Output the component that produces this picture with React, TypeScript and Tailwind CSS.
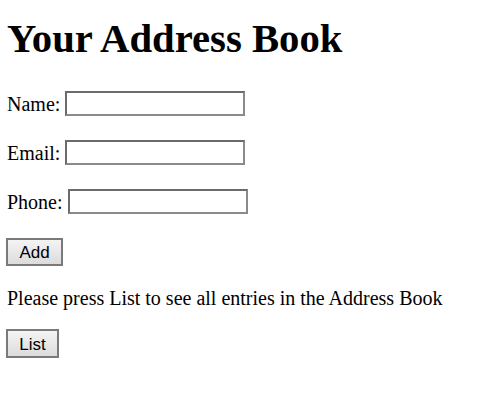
export default function App() {
  const fields = ["Name:", "Email:", "Phone:"];

  return (
    <div className="min-h-screen bg-white px-[7px] pt-[17px] font-['Liberation_Serif',serif] text-[20px] text-black">
      <h1 className="m-0 text-[40.7px] font-bold leading-[44px]">
        Your Address Book
      </h1>

      <div className="mt-[30px] flex flex-col gap-[24px]">
        {fields.map((label) => (
          <div key={label} className="flex h-[25px] items-center">
            <span className="leading-[22px]">{label}</span>
            <input
              type="text"
              className="ml-[5px] h-[25px] w-[180px] border-2 border-t-[#6b6b6b] border-l-[#6b6b6b] border-r-[#8a8a8a] border-b-[#8a8a8a] bg-white px-1 outline-none"
            />
          </div>
        ))}
        <div className="flex h-[28px] items-center">
          <button className="-ml-px h-[28px] w-[57px] border-2 border-[#7a7a7a] bg-gradient-to-b from-[#f4f4f4] to-[#dcdcdc] pt-[2px] font-['Liberation_Sans',sans-serif] text-[17px] leading-[20px] text-black">
            Add
          </button>
        </div>
      </div>

      <p className="mt-[21px] leading-[22px]">
        Please press List to see all entries in the Address Book
      </p>

      <button className="-ml-px mt-[20px] h-[29px] w-[53px] border-2 border-[#7a7a7a] bg-gradient-to-b from-[#f4f4f4] to-[#dcdcdc] pt-[2px] font-['Liberation_Sans',sans-serif] text-[17px] leading-[20px] text-black">
        List
      </button>
    </div>
  );
}
